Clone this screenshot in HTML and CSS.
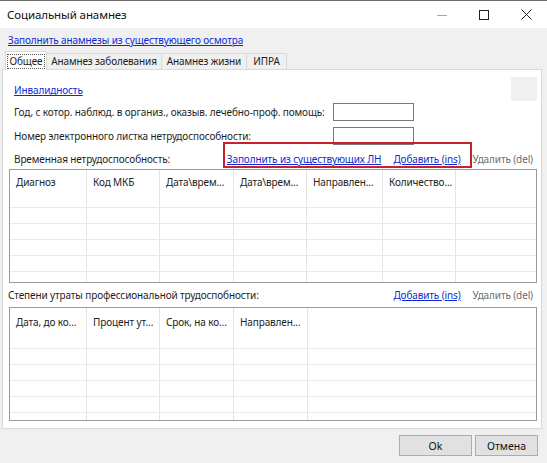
FILE: index.html
```html
<!DOCTYPE html>
<html lang="ru">
<head>
<meta charset="utf-8">
<title>Социальный анамнез</title>
<link rel="stylesheet" href="styles.css">
</head>
<body>
<div class="window">
  <div class="titlebar">
    <span class="title">Социальный анамнез</span>
    <div class="controls">
      <span class="ctl"><svg width="10" height="10" viewBox="0 0 10 10"><path d="M0 5.5H10" stroke="#a8a8a8" stroke-width="1"/></svg></span>
      <span class="ctl"><svg width="10" height="10" viewBox="0 0 10 10"><rect x="0.5" y="0.5" width="9" height="9" fill="none" stroke="#222" stroke-width="1"/></svg></span>
      <span class="ctl"><svg width="11" height="11" viewBox="0 0 11 11"><path d="M0.5 0.5L10.5 10.5M10.5 0.5L0.5 10.5" stroke="#222" stroke-width="1"/></svg></span>
    </div>
  </div>

  <div class="body">
    <a class="link toplink" href="#">Заполнить анамнезы из существующего осмотра</a>

    <div class="tabs">
      <span class="tab tab-active tab-w1"><span class="focus">Общее</span></span>
      <span class="tab tab-w2">Анамнез заболевания</span>
      <span class="tab tab-w3">Анамнез жизни</span>
      <span class="tab tab-w4">ИПРА</span>
    </div>

    <div class="panel">
      <div class="row row-inv">
        <a class="link indent" href="#">Инвалидность</a>
        <span class="graybox"></span>
      </div>
      <div class="row row-field r2">
        <span class="label indent">Год, с котор. наблюд. в организ., оказыв. лечебно-проф. помощь:</span>
        <span class="input"></span>
      </div>
      <div class="row row-field r3">
        <span class="label indent">Номер электронного листка нетрудоспособности:</span>
        <span class="input"></span>
      </div>
      <div class="row row-head r4">
        <span class="indent">Временная нетрудоспособность:</span>
        <span class="actions">
          <a class="link" href="#">Заполнить из существующих ЛН</a>
          <a class="link" href="#">Добавить (ins)</a>
          <span class="disabled">Удалить (del)</span>
        </span>
      </div>

      <div class="grid grid-a">
        <div class="grow ghead">
          <span class="gc">Диагноз</span><span class="gc">Код МКБ</span><span class="gc">Дата\врем...</span><span class="gc">Дата\врем...</span><span class="gc">Направлен...</span><span class="gc">Количество...</span><span class="gc gc-fill"></span>
        </div>
        <div class="grow"><span class="gc"></span><span class="gc"></span><span class="gc"></span><span class="gc"></span><span class="gc"></span><span class="gc"></span><span class="gc gc-fill"></span></div>
        <div class="grow"><span class="gc"></span><span class="gc"></span><span class="gc"></span><span class="gc"></span><span class="gc"></span><span class="gc"></span><span class="gc gc-fill"></span></div>
        <div class="grow"><span class="gc"></span><span class="gc"></span><span class="gc"></span><span class="gc"></span><span class="gc"></span><span class="gc"></span><span class="gc gc-fill"></span></div>
        <div class="grow"><span class="gc"></span><span class="gc"></span><span class="gc"></span><span class="gc"></span><span class="gc"></span><span class="gc"></span><span class="gc gc-fill"></span></div>
        <div class="grow"><span class="gc"></span><span class="gc"></span><span class="gc"></span><span class="gc"></span><span class="gc"></span><span class="gc"></span><span class="gc gc-fill"></span></div>
      </div>

      <div class="row row-head r5">
        <span>Степени утраты профессиональной трудоспобности:</span>
        <span class="actions">
          <a class="link" href="#">Добавить (ins)</a>
          <span class="disabled">Удалить (del)</span>
        </span>
      </div>

      <div class="grid grid-b">
        <div class="grow ghead">
          <span class="gc">Дата, до ко...</span><span class="gc">Процент ут...</span><span class="gc">Срок, на ко...</span><span class="gc">Направлен...</span><span class="gc gc-fill"></span>
        </div>
        <div class="grow"><span class="gc"></span><span class="gc"></span><span class="gc"></span><span class="gc"></span><span class="gc gc-fill"></span></div>
        <div class="grow"><span class="gc"></span><span class="gc"></span><span class="gc"></span><span class="gc"></span><span class="gc gc-fill"></span></div>
        <div class="grow"><span class="gc"></span><span class="gc"></span><span class="gc"></span><span class="gc"></span><span class="gc gc-fill"></span></div>
        <div class="grow"><span class="gc"></span><span class="gc"></span><span class="gc"></span><span class="gc"></span><span class="gc gc-fill"></span></div>
        <div class="grow"><span class="gc"></span><span class="gc"></span><span class="gc"></span><span class="gc"></span><span class="gc gc-fill"></span></div>
      </div>

      <span class="highlight"></span>
    </div>

    <div class="footer">
      <button class="btn btn-ok">Ok</button>
      <button class="btn btn-cancel">Отмена</button>
    </div>
  </div>
</div>
</body>
</html>
```
FILE: styles.css
```css
* { box-sizing: border-box; }
html, body { margin: 0; padding: 0; }
body {
  width: 547px;
  height: 463px;
  overflow: hidden;
  background: #f0f0f0;
  font-family: "Noto Sans", "Liberation Sans", sans-serif;
  font-size: 10px;
  letter-spacing: -0.12px;
  color: #1e1e1e;
  white-space: nowrap;
}
.window { width: 547px; height: 463px; display: flex; flex-direction: column; }

.titlebar {
  height: 28px;
  border-top: 1px solid #6e6e6e;
  background: #fff;
  display: flex;
  align-items: center;
  padding-left: 7px;
}
.title { font-size: 11.5px; letter-spacing: -0.1px; color: #111; }
.controls { margin-left: auto; display: flex; height: 100%; }
.ctl { width: 42px; display: flex; align-items: center; justify-content: center; }

.body { flex: 1; display: flex; flex-direction: column; }

.link { color: #0a2bd4; text-decoration: underline; }
.toplink { display: block; height: 16px; line-height: 16px; margin: 4px 0 0 8px; align-self: flex-start; }

.tabs {
  display: flex;
  align-items: flex-end;
  height: 18px;
  margin-top: 3px;
  padding-left: 5px;
}
.tab {
  height: 16px;
  line-height: 14px;
  border: 1px solid #d9d9d9;
  border-bottom: none;
  background: #f0f0f0;
  text-align: center;
  color: #1e1e1e;
  margin-left: -1px;
}
.tab-active {
  height: 19px;
  margin-bottom: -1px;
  background: #fff;
  position: relative;
  z-index: 1;
  padding-top: 2px;
  margin-left: 0;
}
.focus { display: inline-block; border: 1px dotted #555; line-height: 13px; padding: 0 2px; }
.tab-w1 { width: 42px; }
.tab-w2 { width: 116px; }
.tab-w3 { width: 86px; }
.tab-w4 { width: 41px; }

.panel {
  position: relative;
  margin-left: 2px;
  width: 540px;
  background: #fff;
  border: 1px solid #d9d9d9;
  padding: 0 4px 7px 5px;
  display: flex;
  flex-direction: column;
}
.row { display: flex; align-items: center; }
.indent { margin-left: 6px; }
.row-inv { height: 24px; margin-top: 7px; padding-top: 2px; }
.graybox { margin-left: auto; margin-top: -2px; width: 26px; height: 24px; background: #f0f0f0; }
.row-field { height: 18px; }
.r2 { margin-top: 2px; }
.r3 { margin-top: 6px; }
.label { width: 319px; }
.input { width: 81px; height: 18px; border: 1px solid #7a7a7a; background: #fff; }
.row-head { justify-content: space-between; }
.r4 { height: 20px; margin-top: 4px; }
.r5 { height: 24px; }
.actions { display: flex; gap: 12px; padding-right: 4px; }
.disabled { color: #6d6d6d; }

.grid {
  margin-left: 1px;
  height: 114px;
  overflow: hidden;
  border: 1px solid #9a9a9a;
  background: #fff;
}
.grow { display: grid; height: 16px; border-bottom: 1px solid #ebebeb; }
.grid-a .grow { grid-template-columns: 77px 73px 74px 73px 76px 73px 1fr; }
.grid-b .grow { grid-template-columns: 77px 73px 74px 74px 1fr; }
.gc { border-right: 1px solid #e4e4e4; padding-left: 6px; overflow: hidden; color: #222; }
.gc-fill { border-right: none; }
.grid-a .ghead { height: 38px; }
.grid-a .ghead .gc { padding-top: 5px; }
.grid-b .ghead { height: 41px; }
.grid-b .ghead .gc { padding-top: 7px; }

.highlight {
  position: absolute;
  left: 220px;
  top: 72px;
  width: 249px;
  height: 26px;
  border: 2px solid #c9212b;
  pointer-events: none;
}

.footer {
  display: flex;
  justify-content: flex-end;
  gap: 3px;
  padding: 6px 9px 0 0;
}
.btn {
  height: 21px;
  border: 1px solid #adadad;
  background: #e1e1e1;
  font-family: inherit;
  font-size: 10.5px;
  color: #111;
  padding: 0;
}
.btn-ok { width: 73px; }
.btn-cancel { width: 63px; }
```
